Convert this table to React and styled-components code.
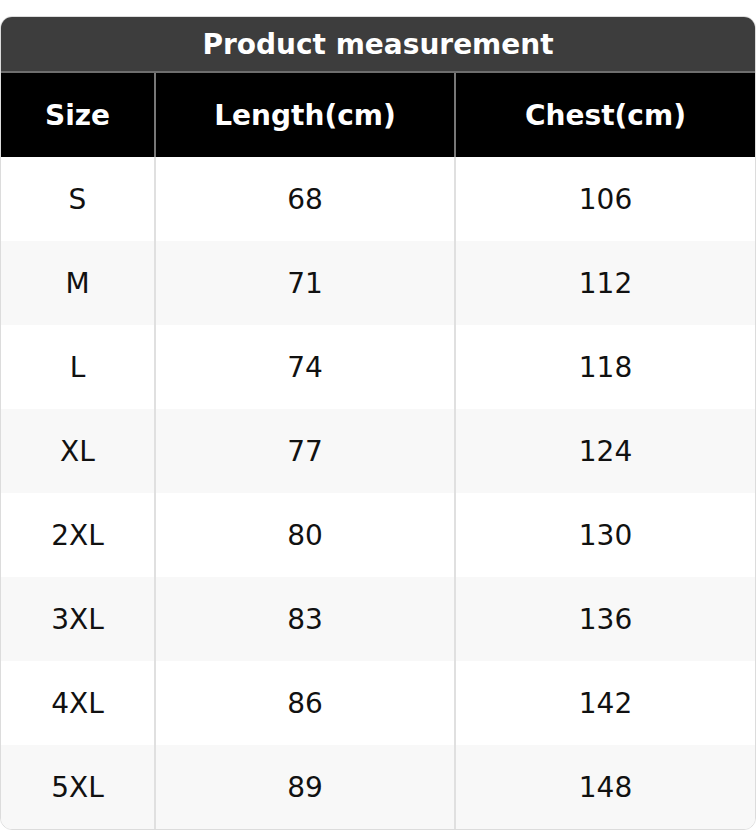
import React from "react";
import styled, { createGlobalStyle } from "styled-components";

const Global = createGlobalStyle`
  html, body { margin: 0; padding: 0; background: #fff; }
  body { font-family: "DejaVu Sans", "Liberation Sans", sans-serif; }
`;

const Page = styled.div`
  padding-top: 16px;
  width: 756px;
`;

const Card = styled.div`
  box-sizing: border-box;
  width: 756px;
  border: 1px solid #dcdcdc;
  border-radius: 12px;
  overflow: hidden;
  background: #fff;
`;

const Title = styled.div`
  height: 54px;
  background: #3d3d3d;
  color: #fff;
  font-weight: bold;
  font-size: 28px;
  display: flex;
  align-items: center;
  justify-content: center;
  border-bottom: 2px solid #6e6e6e;
`;

const Row = styled.div`
  display: grid;
  grid-template-columns: 155px 300px 1fr;
  height: 84px;
  background: ${(p) => (p.$head ? "#000" : p.$alt ? "#f8f8f8" : "#fff")};
`;

const Cell = styled.div`
  box-sizing: border-box;
  display: flex;
  align-items: center;
  justify-content: center;
  font-size: 28px;
  font-weight: ${(p) => (p.$head ? "bold" : "normal")};
  color: ${(p) => (p.$head ? "#fff" : "#111")};
  border-right: ${(p) =>
    p.$last ? "none" : `2px solid ${p.$head ? "#777" : "#e0e0e0"}`};
`;

const data = [
  ["S", "68", "106"],
  ["M", "71", "112"],
  ["L", "74", "118"],
  ["XL", "77", "124"],
  ["2XL", "80", "130"],
  ["3XL", "83", "136"],
  ["4XL", "86", "142"],
  ["5XL", "89", "148"],
];

export default function App() {
  return (
    <Page>
      <Global />
      <Card>
        <Title>Product measurement</Title>
        <Row $head>
          <Cell $head>Size</Cell>
          <Cell $head>Length(cm)</Cell>
          <Cell $head $last>Chest(cm)</Cell>
        </Row>
        {data.map((r, i) => (
          <Row key={r[0]} $alt={i % 2 === 1}>
            <Cell>{r[0]}</Cell>
            <Cell>{r[1]}</Cell>
            <Cell $last>{r[2]}</Cell>
          </Row>
        ))}
      </Card>
    </Page>
  );
}
